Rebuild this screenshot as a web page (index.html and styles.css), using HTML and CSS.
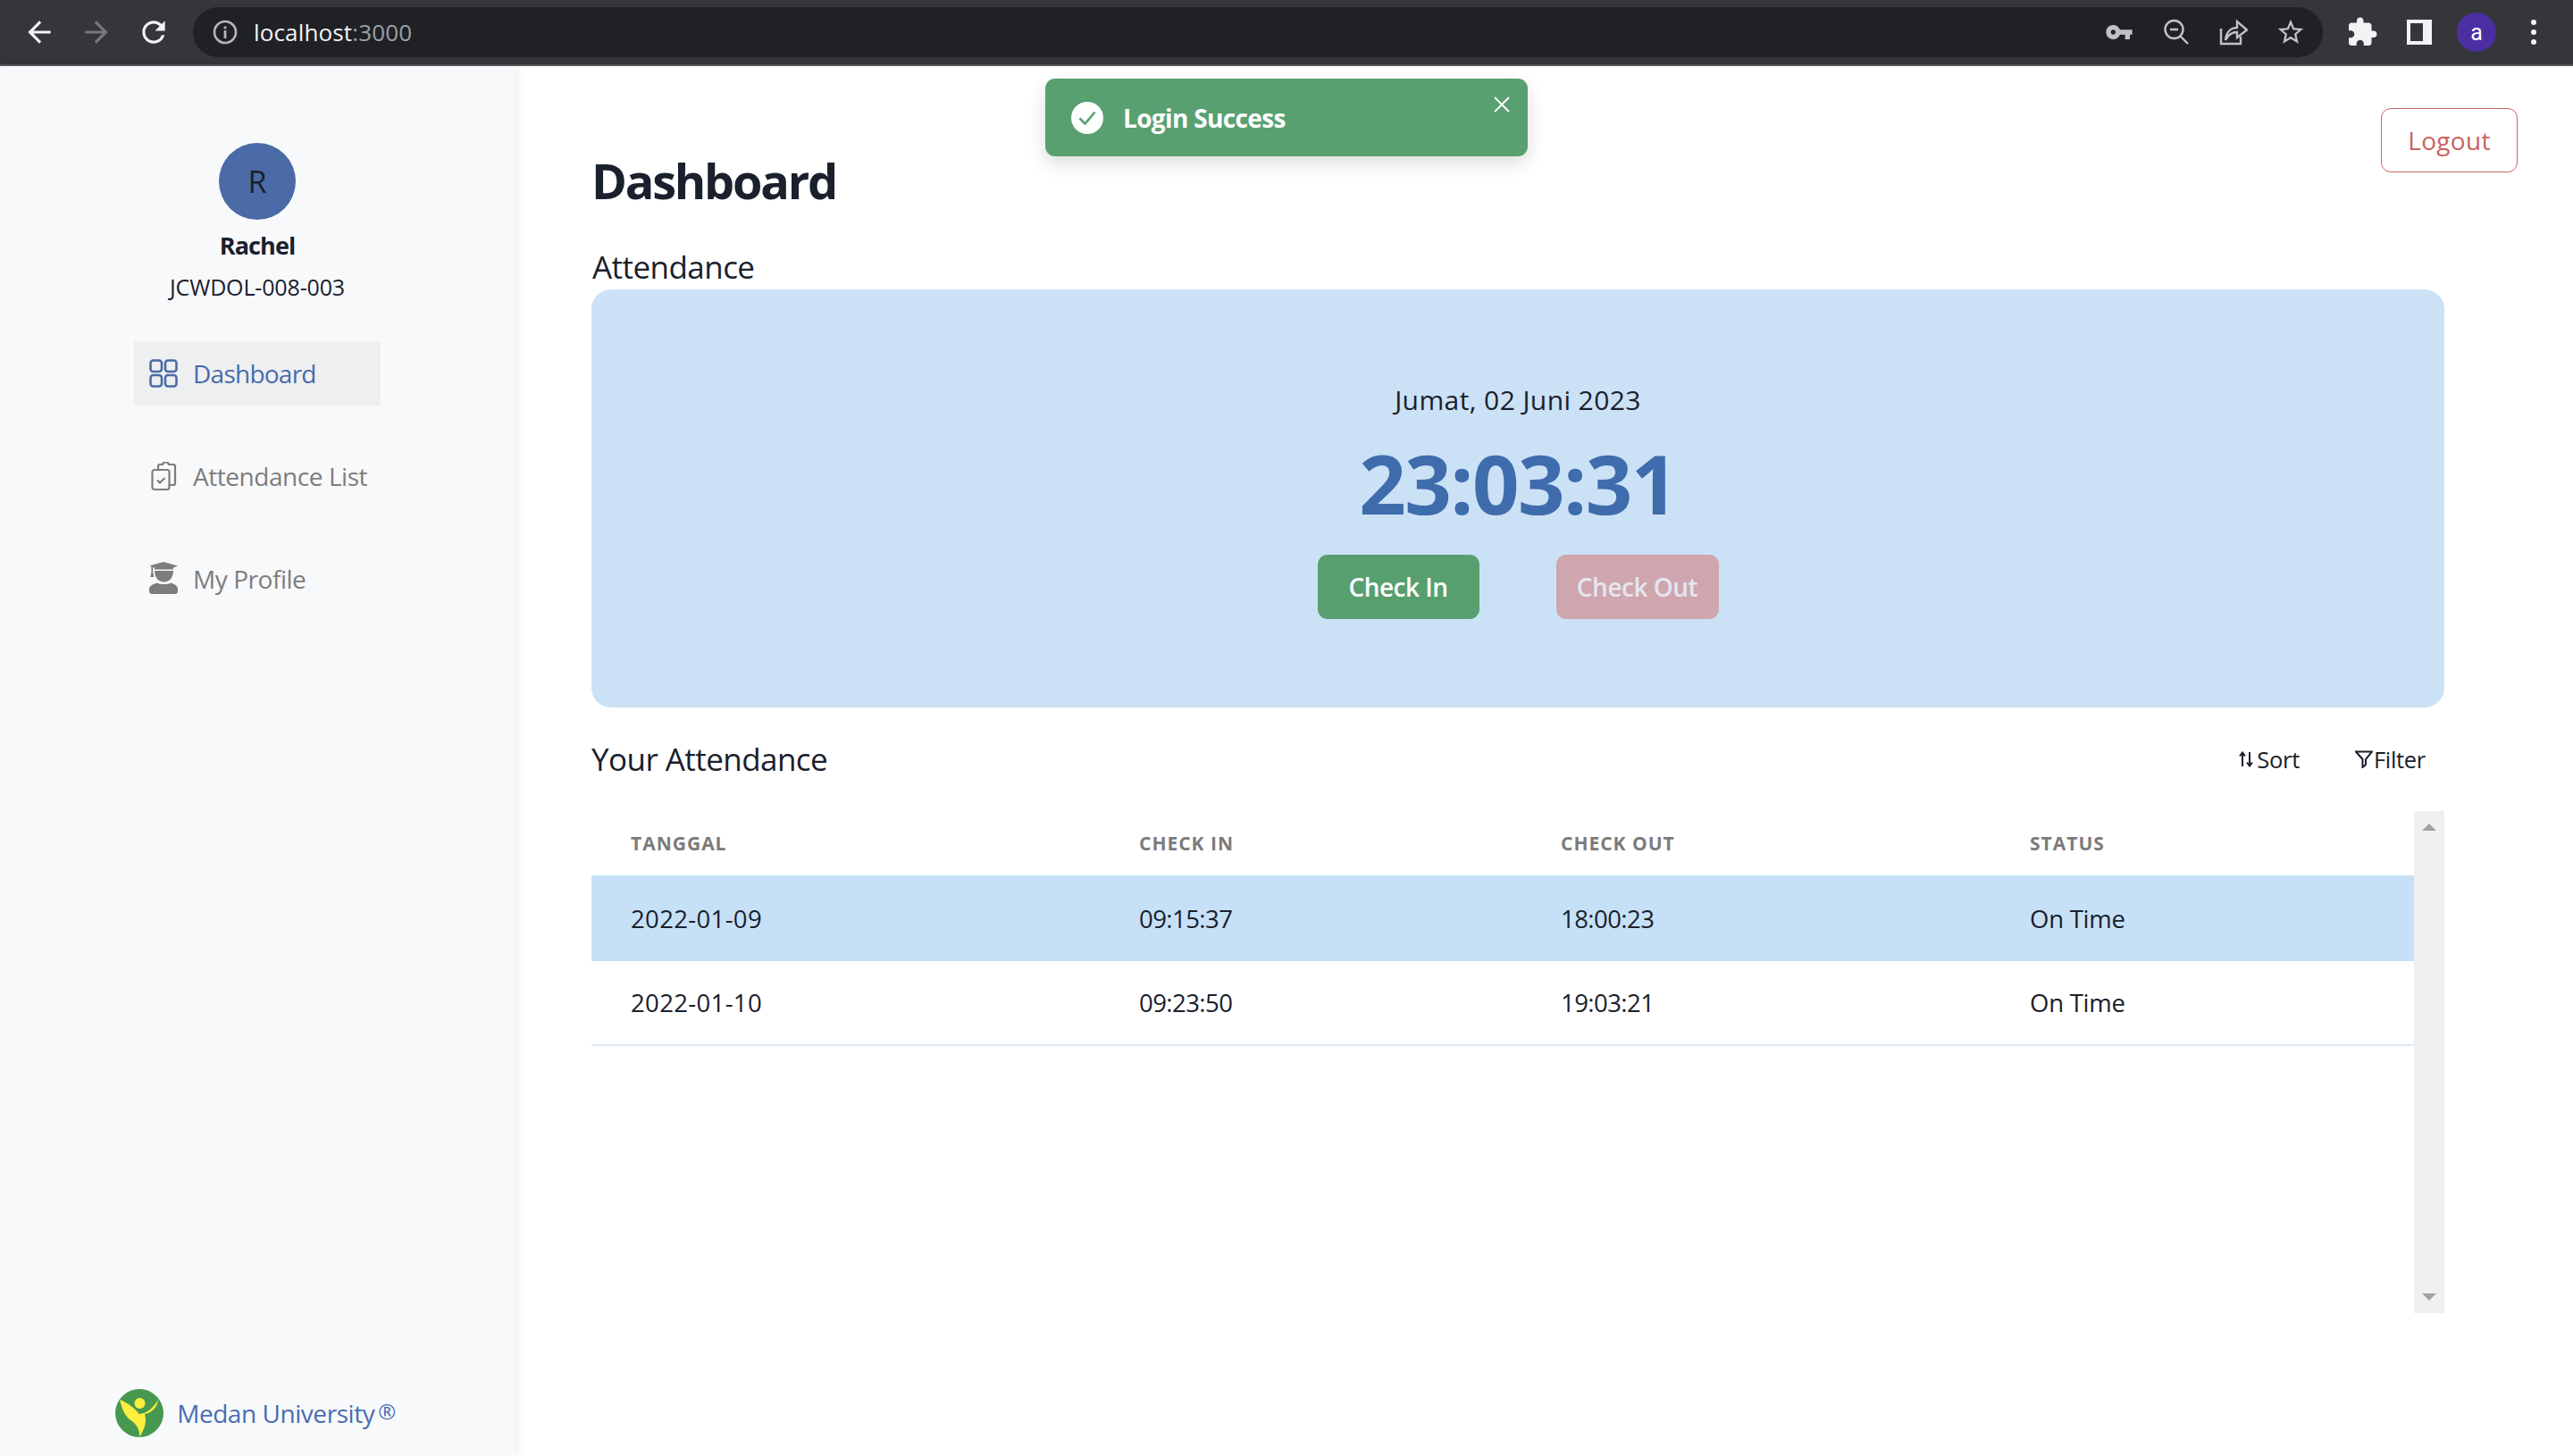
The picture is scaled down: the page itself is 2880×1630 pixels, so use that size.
FILE: index.html
```html
<!DOCTYPE html>
<html lang="en">
<head>
<meta charset="utf-8">
<title>Dashboard</title>
<link rel="stylesheet" href="styles.css">
</head>
<body>
<header class="chrome">
  <div class="tool-group">
    <span class="tool"><svg class="ic-38 white" viewBox="0 0 24 24"><path d="M20 11H7.83l5.59-5.59L12 4l-8 8 8 8 1.41-1.41L7.83 13H20v-2z"/></svg></span>
    <span class="tool"><svg class="ic-38 dim" viewBox="0 0 24 24"><path d="M12 4l-1.41 1.41L16.17 11H4v2h12.17l-5.58 5.59L12 20l8-8z"/></svg></span>
    <span class="tool"><svg class="ic-38 white" viewBox="0 0 24 24"><path d="M17.65 6.35C16.2 4.9 14.21 4 12 4c-4.42 0-7.99 3.58-7.99 8s3.57 8 7.99 8c3.73 0 6.84-2.55 7.73-6h-2.08c-.82 2.33-3.04 4-5.65 4-3.31 0-6-2.69-6-6s2.69-6 6-6c1.66 0 3.14.69 4.22 1.78L13 11h7V4l-2.35 2.35z"/></svg></span>
  </div>
  <div class="omnibox">
    <svg class="info" viewBox="0 0 32 32"><circle cx="16" cy="16" r="12" fill="none" stroke="#b5b7ba" stroke-width="2.6"/><rect x="14.6" y="14" width="2.8" height="9" fill="#b5b7ba"/><rect x="14.6" y="9.5" width="2.8" height="2.8" fill="#b5b7ba"/></svg>
    <span class="url">localhost<span class="url-port">:3000</span></span>
    <div class="omni-tools">
      <span class="tool"><svg class="ic-32 grey" viewBox="0 0 24 24"><path d="M12.65 10C11.83 7.67 9.61 6 7 6c-3.31 0-6 2.69-6 6s2.69 6 6 6c2.61 0 4.83-1.67 5.65-4H17v4h4v-4h2v-4H12.65zM7 14c-1.1 0-2-.9-2-2s.9-2 2-2 2 .9 2 2-.9 2-2 2z"/></svg></span>
      <span class="tool"><svg class="ic-32 line" viewBox="0 0 32 32"><circle cx="13.5" cy="13" r="10"/><path d="M20.5 20.5 L29 29 M9 13 H18"/></svg></span>
      <span class="tool"><svg class="ic-32 line" viewBox="0 0 32 32"><path d="M2 12 V29 H24 V21"/><path d="M7 25 C8 16 13 11 20 11 V4 L31 13.5 L20 22 V16 C14 16 10 19 7 25 Z"/></svg></span>
      <span class="tool"><svg class="ic-34 grey" viewBox="0 0 24 24"><path d="M22 9.24l-7.19-.62L12 2 9.19 8.63 2 9.24l5.46 4.73L5.82 21 12 17.27 18.18 21l-1.63-7.03L22 9.24zM12 15.4l-3.76 2.27 1-4.28-3.32-2.88 4.38-.38L12 6.1l1.71 4.04 4.38.38-3.32 2.88 1 4.28L12 15.4z"/></svg></span>
    </div>
  </div>
  <div class="tool-group">
    <span class="tool"><svg class="ic-36 bright" viewBox="0 0 24 24"><path d="M20.5 11H19V7c0-1.1-.9-2-2-2h-4V3.5C13 2.12 11.88 1 10.5 1S8 2.12 8 3.5V5H4c-1.1 0-1.99.9-1.99 2v3.8H3.5c1.49 0 2.7 1.21 2.7 2.7s-1.21 2.7-2.7 2.7H2V20c0 1.1.9 2 2 2h3.8v-1.5c0-1.49 1.21-2.7 2.7-2.7 1.49 0 2.7 1.21 2.7 2.7V22H17c1.1 0 2-.9 2-2v-4h1.5c1.38 0 2.5-1.12 2.5-2.5S21.88 11 20.5 11z"/></svg></span>
    <span class="tool"><span class="side-panel"><span class="side-panel-hole"></span></span></span>
    <span class="tool"><span class="profile-chip">a</span></span>
    <span class="tool"><span class="dots"><i></i><i></i><i></i></span></span>
  </div>
</header>

<div class="page">
  <aside class="sidebar">
    <div class="sidebar-top">
      <div class="avatar">R</div>
      <div class="user-name">Rachel</div>
      <div class="user-id">JCWDOL-008-003</div>
      <nav class="nav">
        <a class="nav-item nav-active">
          <svg class="nav-icon stroke-blue" viewBox="0 0 32 32"><rect x="1.5" y="1.5" width="12.5" height="12.5" rx="3"/><rect x="18" y="1.5" width="12.5" height="12.5" rx="3"/><rect x="1.5" y="18" width="12.5" height="12.5" rx="3"/><rect x="18" y="18" width="12.5" height="12.5" rx="3"/></svg>
          <span>Dashboard</span>
        </a>
        <a class="nav-item">
          <svg class="nav-icon stroke-grey" viewBox="0 0 32 32"><path d="M10 9 V5 a2 2 0 0 1 2 -2 H15 a3.5 2.5 0 0 1 7 0 H27 a2 2 0 0 1 2 2 V24 a2 2 0 0 1 -2 2 H23"/><rect x="3.5" y="9" width="19" height="22" rx="2.5"/><path d="M9 20.5 l3 3 l5.5 -5.5"/></svg>
          <span>Attendance List</span>
        </a>
        <a class="nav-item">
          <svg class="nav-icon-tall fill-grey" viewBox="0 0 32 36"><path d="M16 0 L32 4.5 L27 6.5 V8.5 H6 V6.5 L4.2 5.9 V12 L5.4 17 H1.2 L2.4 12 V5.3 L0 4.5 Z"/><path d="M6 10 H27 C27 17 23 22.5 16.5 22.5 C10 22.5 6 17 6 10 Z"/><path d="M9 23.5 C12 25.5 21 25.5 24 23.5 C28 24.5 32 27 32 30 V33 a3 3 0 0 1 -3 3 H3 a3 3 0 0 1 -3 -3 V30 C0 27 5 24.5 9 23.5 Z"/></svg>
          <span>My Profile</span>
        </a>
      </nav>
    </div>
    <div class="brand">
      <svg class="brand-logo" viewBox="0 0 54 54"><circle cx="27" cy="27" r="27" fill="#46984f"/><circle cx="27.5" cy="16" r="6" fill="#fcee3d"/><path d="M5 12 C14 15 22 22 27 28 C30 27 34 27 36 25 C41 22 45 17 48 12 C47 20 41 27 33 28 C36 37 32 46 27 54 C28 46 24 39 16 34 C10 29 7 20 5 12 Z" fill="#fcee3d"/></svg>
      <span class="brand-name">Medan University<sup class="brand-mark">®</sup></span>
    </div>
  </aside>

  <main class="content">
    <div class="content-head">
      <h1 class="title">Dashboard</h1>
      <button class="logout">Logout</button>
    </div>
    <section class="section">
      <h2 class="heading heading-top">Attendance</h2>
      <div class="clock-panel">
        <div class="clock-date">Jumat, 02 Juni 2023</div>
        <div class="clock-time">23:03:31</div>
        <div class="clock-actions">
          <button class="btn btn-in">Check In</button>
          <button class="btn btn-out">Check Out</button>
        </div>
      </div>
      <div class="list-head">
        <h2 class="heading">Your Attendance</h2>
        <div class="list-actions">
          <span class="list-action"><svg class="ic-sort" viewBox="0 0 16 18"><path d="M4 17 V2 M1 5.5 L4 1.5 L7 5.5 M12 1 V16 M9 12.5 L12 16.5 L15 12.5"/></svg>Sort</span>
          <span class="list-action action-filter"><svg class="ic-filter" viewBox="0 0 20 20"><path d="M1 1.5 H19 L12 10 V16 L8.5 19 V10 Z"/></svg>Filter</span>
        </div>
      </div>
      <div class="table-wrap">
        <table class="table">
          <thead>
            <tr><th>Tanggal</th><th>Check In</th><th>Check Out</th><th>Status</th></tr>
          </thead>
          <tbody>
            <tr class="row-on"><td>2022-01-09</td><td>09:15:37</td><td>18:00:23</td><td>On Time</td></tr>
            <tr class="row-off"><td>2022-01-10</td><td>09:23:50</td><td>19:03:21</td><td>On Time</td></tr>
          </tbody>
        </table>
        <div class="scrollbar"><span class="arrow-up"></span><span class="arrow-down"></span></div>
      </div>
    </section>
  </main>
</div>

<div class="toast">
  <svg class="toast-icon" viewBox="0 0 36 36"><circle cx="18" cy="18" r="18" fill="#fff"/><path d="M9.5 18.5 L15.5 24.5 L26.5 11.5" fill="none" stroke="#59a070" stroke-width="2.6"/></svg>
  <span class="toast-text">Login Success</span>
  <svg class="toast-close" viewBox="0 0 18 18"><path d="M1 1 L17 17 M17 1 L1 17" stroke="#fff" stroke-width="1.8"/></svg>
</div>
</body>
</html>
```
FILE: styles.css
```css
* { box-sizing: border-box; }
html, body { margin: 0; padding: 0; height: 100%; }
body {
  width: 2880px;
  height: 1630px;
  overflow: hidden;
  background: #fff;
  color: #1a202c;
  font-family: "Open Sans", "Noto Sans", sans-serif;
  font-size: 28px;
  display: flex;
  flex-direction: column;
  position: relative;
}

/* browser bar */
.chrome {
  flex: none;
  height: 74px;
  background: #35363a;
  border-bottom: 2px solid #55565a;
  display: flex;
  align-items: center;
  padding: 0 12px;
  gap: 12px;
}
.tool-group { display: flex; }
.tool { width: 64px; height: 56px; display: flex; align-items: center; justify-content: center; }
.omnibox {
  flex: 1;
  height: 56px;
  background: #202124;
  border-radius: 28px;
  display: flex;
  align-items: center;
  padding: 0 4px 0 20px;
}
.info { width: 32px; height: 32px; flex: none; margin-right: 16px; }
.url { color: #f1f3f4; font-size: 26px; letter-spacing: .15px; }
.url-port { color: #9aa0a6; }
.omni-tools { margin-left: auto; display: flex; }
.ic-38 { width: 38px; height: 38px; }
.ic-36 { width: 36px; height: 36px; }
.ic-34 { width: 34px; height: 34px; }
.ic-32 { width: 32px; height: 32px; }
.white { fill: #f1f3f4; }
.dim { fill: #77787b; }
.grey { fill: #c0c2c4; }
.bright { fill: #f1f3f4; }
.line { fill: none; stroke: #c0c2c4; stroke-width: 2.4; }
.side-panel { width: 28px; height: 28px; background: #f1f3f4; padding: 4px 10px 4px 4px; display: block; }
.side-panel-hole { display: block; width: 14px; height: 20px; background: #35363a; }
.profile-chip {
  width: 44px; height: 44px; border-radius: 50%;
  background: #4c2ea3; color: #fff; font-size: 25px;
  display: flex; align-items: center; justify-content: center;
  font-family: Roboto, sans-serif;
}
.dots { display: flex; flex-direction: column; gap: 5px; }
.dots i { width: 6px; height: 6px; border-radius: 50%; background: #f1f3f4; display: block; }

/* layout */
.page { flex: 1; display: flex; min-height: 0; }

.sidebar {
  flex: none;
  width: 576px;
  background: #f8f9fb;
  box-shadow: 3px 0 10px rgba(0, 0, 0, .07);
  display: flex;
  flex-direction: column;
  justify-content: space-between;
  align-items: center;
  padding: 86px 0 21px;
}
.sidebar-top { display: flex; flex-direction: column; align-items: center; }
.avatar {
  width: 86px; height: 86px; border-radius: 50%;
  background: #4a6ba6; color: #1a202c;
  font-size: 34px;
  display: flex; align-items: center; justify-content: center;
}
.user-name { font-weight: 700; font-size: 27px; line-height: 38px; margin-top: 10px; letter-spacing: -.9px; }
.user-id { font-size: 25px; line-height: 36px; margin-top: 9px; letter-spacing: -.15px; }
.nav { margin-top: 43px; display: flex; flex-direction: column; gap: 43px; width: 276px; }
.nav-item {
  height: 72px;
  display: flex;
  align-items: center;
  gap: 17px;
  padding-left: 17px;
  color: #7d7d7d;
  font-size: 28px;
  letter-spacing: -.45px;
}
.nav-active { background: #eeeff0; color: #476bac; letter-spacing: -.75px; }
.nav-icon { width: 32px; height: 32px; flex: none; }
.nav-icon-tall { width: 32px; height: 36px; flex: none; margin-top: -2px; }
.stroke-blue { fill: none; stroke: #4a6ba6; stroke-width: 2.6; }
.stroke-grey { fill: none; stroke: #7d7d7d; stroke-width: 2.2; }
.fill-grey { fill: #7d7d7d; }

.brand { display: flex; align-items: center; gap: 15px; padding-right: 4px; }
.brand-logo { width: 54px; height: 54px; flex: none; }
.brand-name { color: #4a6db0; font-size: 28px; letter-spacing: -.45px; }
.brand-mark { font-size: 24px; line-height: 0; margin-left: 4px; vertical-align: 4px; }

/* content */
.content { flex: 1; min-width: 0; padding: 47px 62px 0 86px; }
.content-head { display: flex; justify-content: space-between; align-items: flex-start; }
.title { margin: 49px 0 0; font-size: 54px; line-height: 65px; font-weight: 700; letter-spacing: -2.2px; }
.logout {
  width: 153px; height: 72px;
  border: 1.5px solid #c96a66; border-radius: 11px;
  background: #fff; color: #c9625f;
  font: inherit; font-size: 28px; letter-spacing: .3px;
  padding: 0;
}
.section { margin-top: 41px; padding-right: 82px; }
.heading { margin: 0; font-size: 35px; line-height: 48px; font-weight: 400; letter-spacing: -.55px; }
.heading-top { line-height: 46px; padding-bottom: 2px; padding-left: 1px; }

.clock-panel {
  height: 468px;
  background: #cbe1f5;
  border-radius: 22px;
  padding-top: 104px;
  display: flex;
  flex-direction: column;
  align-items: center;
}
.clock-date { font-size: 30px; line-height: 40px; letter-spacing: .4px; }
.clock-time { margin-top: 23px; font-size: 92px; line-height: 100px; font-weight: 700; color: #3f6cad; letter-spacing: -1.6px; }
.clock-actions { margin-top: 30px; display: flex; gap: 86px; }
.btn {
  height: 72px; border: 0; border-radius: 11px;
  font: inherit; font-weight: 600; font-size: 28px; letter-spacing: -.5px;
  padding: 0;
}
.btn-in { width: 181px; background: #589f70; color: #fff; }
.btn-out { width: 182px; background: #cfa5ae; color: #e4e6ef; }

.list-head { margin-top: 34px; display: flex; justify-content: space-between; align-items: center; }
.list-actions { display: flex; gap: 62px; padding-right: 21px; }
.list-action { display: flex; align-items: center; gap: 4px; font-size: 25.5px; letter-spacing: -.3px; }
.action-filter { gap: 1px; }
.ic-sort { width: 16px; height: 18px; fill: none; stroke: #1a202c; stroke-width: 2; }
.ic-filter { width: 20px; height: 20px; fill: none; stroke: #1a202c; stroke-width: 2; }

.table-wrap { margin-top: 34px; height: 562px; display: flex; }
.table { flex: none; width: 2040px; height: 262px; border-collapse: collapse; table-layout: fixed; }
.table th:nth-child(1), .table td:nth-child(1) { width: 569px; }
.table th:nth-child(2), .table td:nth-child(2) { width: 472px; }
.table th:nth-child(3), .table td:nth-child(3) { width: 525px; }
.table th {
  height: 72px; padding: 0 0 0 44px; text-align: left;
  font-size: 21px; font-weight: 700; text-transform: uppercase;
  color: #7b7b7b; letter-spacing: 1px;
}
.table td { padding: 0 0 0 44px; font-size: 27.5px; letter-spacing: -.55px; }
.table td:nth-child(1) { letter-spacing: .35px; }
.table td:nth-child(4) { letter-spacing: -.25px; }
.row-on td { height: 96px; background: #c6e1f7; }
.row-off td { height: 94px; border-bottom: 2px solid #dcebf6; }

.scrollbar {
  flex: none; width: 34px;
  background: #f0f0f0;
  display: flex; flex-direction: column; justify-content: space-between; align-items: center;
  padding: 14px 0;
}
.arrow-up, .arrow-down { width: 0; height: 0; border-left: 8px solid transparent; border-right: 8px solid transparent; }
.arrow-up { border-bottom: 8px solid #a3a3a3; }
.arrow-down { border-top: 8px solid #a3a3a3; }

/* toast */
.toast {
  position: absolute;
  left: 1170px; top: 88px;
  width: 540px; height: 87px;
  border-radius: 11px;
  background: #59a070;
  color: #fff;
  display: flex; align-items: center; gap: 22px;
  padding-left: 29px;
  box-shadow: 0 8px 20px rgba(0, 0, 0, .14);
}
.toast-icon { width: 36px; height: 36px; flex: none; }
.toast-text { font-size: 28px; font-weight: 700; letter-spacing: -.65px; }
.toast-close { position: absolute; right: 20px; top: 20px; width: 18px; height: 18px; }
```
